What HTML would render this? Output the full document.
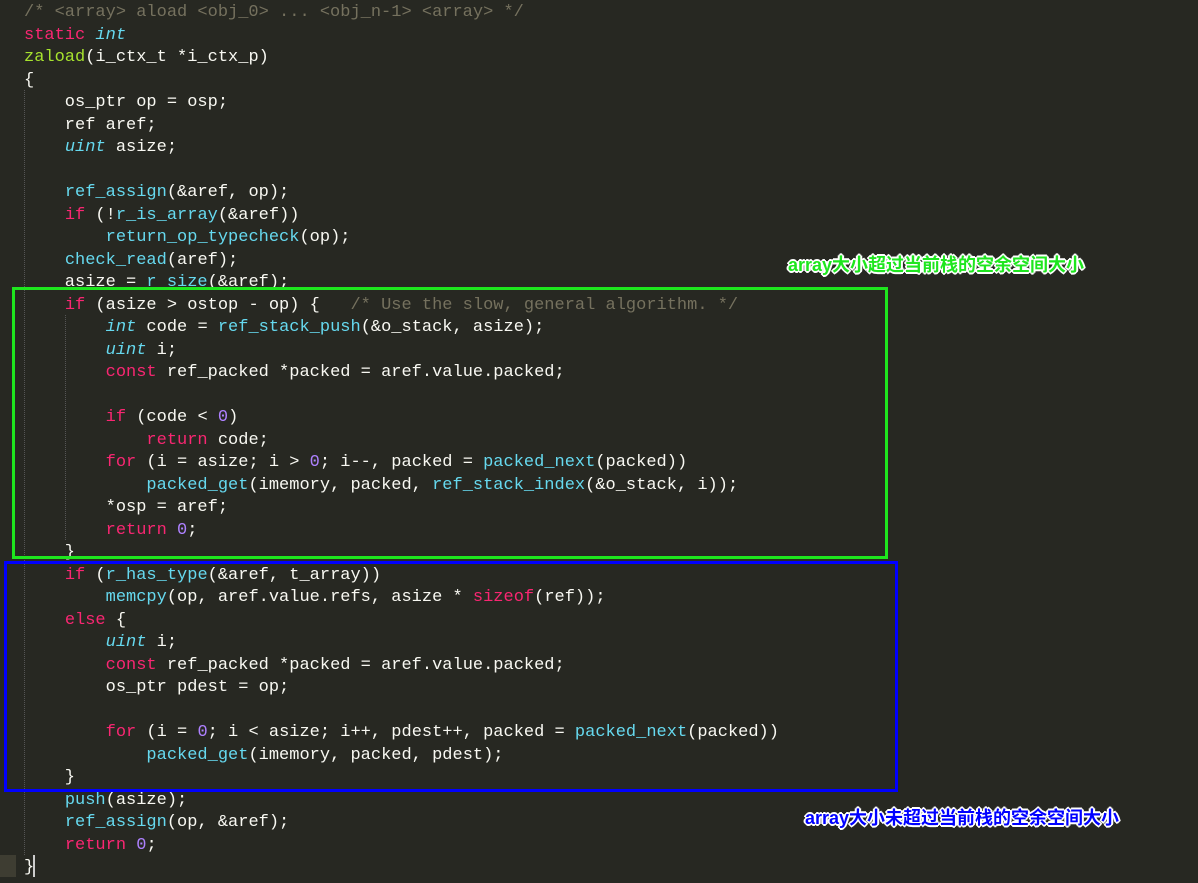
<!DOCTYPE html>
<html><head><meta charset="utf-8"><style>
body{margin:0;background:#272822;width:1198px;height:883px;overflow:hidden;position:relative}
pre{margin:0;position:absolute;left:24px;top:2px;font-family:"Liberation Mono",monospace;font-size:17px;line-height:22.5px;color:#F8F8F2}
.c{color:#75715E}.k{color:#F92672}.t{color:#66D9EF;font-style:italic}.f{color:#66D9EF}.g{color:#A6E22E}.n{color:#AE81FF}
.box{position:absolute;box-sizing:border-box;border:3px solid}
.lbl{position:absolute;font-family:"Liberation Sans","Noto Sans CJK SC",sans-serif;font-weight:bold;font-size:18px;line-height:22px;white-space:nowrap;text-shadow:-2px 0 #fff,2px 0 #fff,0 -2px #fff,0 2px #fff,-1px -1px #fff,1px 1px #fff,-1px 1px #fff,1px -1px #fff}
.guide{position:absolute;width:0;border-left:1px dotted #555}
</style></head><body>
<div class="guide" style="left:24px;top:90px;height:765px"></div>
<div class="guide" style="left:65px;top:315px;height:225px"></div>
<div style="position:absolute;left:0;top:855px;width:16px;height:22px;background:#3e3d32"></div>
<div style="position:absolute;left:33px;top:855px;width:2px;height:22px;background:#ccc"></div>
<pre><span class="c">/* &lt;array&gt; aload &lt;obj_0&gt; ... &lt;obj_n-1&gt; &lt;array&gt; */</span>
<span class="k">static</span> <span class="t">int</span>
<span class="g">zaload</span>(i_ctx_t *i_ctx_p)
{
    os_ptr op = osp;
    ref aref;
    <span class="t">uint</span> asize;

    <span class="f">ref_assign</span>(&amp;aref, op);
    <span class="k">if</span> (!<span class="f">r_is_array</span>(&amp;aref))
        <span class="f">return_op_typecheck</span>(op);
    <span class="f">check_read</span>(aref);
    asize = <span class="f">r_size</span>(&amp;aref);
    <span class="k">if</span> (asize &gt; ostop - op) {   <span class="c">/* Use the slow, general algorithm. */</span>
        <span class="t">int</span> code = <span class="f">ref_stack_push</span>(&amp;o_stack, asize);
        <span class="t">uint</span> i;
        <span class="k">const</span> ref_packed *packed = aref.value.packed;

        <span class="k">if</span> (code &lt; <span class="n">0</span>)
            <span class="k">return</span> code;
        <span class="k">for</span> (i = asize; i &gt; <span class="n">0</span>; i--, packed = <span class="f">packed_next</span>(packed))
            <span class="f">packed_get</span>(imemory, packed, <span class="f">ref_stack_index</span>(&amp;o_stack, i));
        *osp = aref;
        <span class="k">return</span> <span class="n">0</span>;
    }
    <span class="k">if</span> (<span class="f">r_has_type</span>(&amp;aref, t_array))
        <span class="f">memcpy</span>(op, aref.value.refs, asize * <span class="k">sizeof</span>(ref));
    <span class="k">else</span> {
        <span class="t">uint</span> i;
        <span class="k">const</span> ref_packed *packed = aref.value.packed;
        os_ptr pdest = op;

        <span class="k">for</span> (i = <span class="n">0</span>; i &lt; asize; i++, pdest++, packed = <span class="f">packed_next</span>(packed))
            <span class="f">packed_get</span>(imemory, packed, pdest);
    }
    <span class="f">push</span>(asize);
    <span class="f">ref_assign</span>(op, &amp;aref);
    <span class="k">return</span> <span class="n">0</span>;
}</pre>
<div class="box" style="left:12px;top:287px;width:876px;height:272px;border-color:#1ee61e"></div>
<div class="box" style="left:4px;top:561px;width:894px;height:231px;border-color:#0000ff"></div>
<div class="lbl" style="left:788px;top:254px;color:#1ee61e">array大小超过当前栈的空余空间大小</div>
<div class="lbl" style="left:805px;top:807px;color:#0000ff">array大小未超过当前栈的空余空间大小</div>
</body></html>
